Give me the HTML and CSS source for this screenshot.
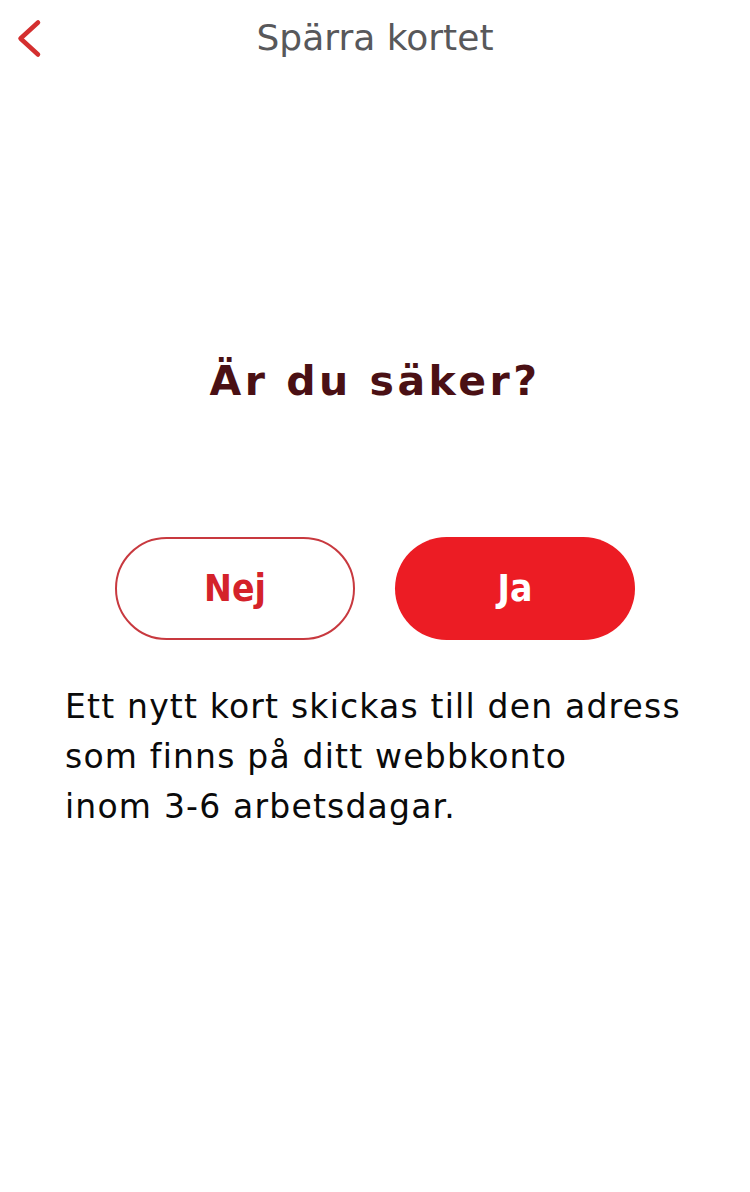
FILE: index.html
```html
<!DOCTYPE html>
<html lang="sv">
<head>
<meta charset="utf-8">
<title>Spärra kortet</title>
<link rel="stylesheet" href="styles.css">
</head>
<body>
<div class="screen">
  <header class="topbar">
    <button class="back" aria-label="Tillbaka">
      <svg width="30" height="40" viewBox="0 0 30 40"><path d="M24 3.5 L6.5 19.5 L24 35.5" fill="none" stroke="#d42f2f" stroke-width="4.5" stroke-linecap="round" stroke-linejoin="round"/></svg>
    </button>
    <h1 class="title">Spärra kortet</h1>
  </header>
  <main class="content">
    <h2 class="question">Är du säker?</h2>
    <div class="actions">
      <button class="btn btn-outline">Nej</button>
      <button class="btn btn-fill">Ja</button>
    </div>
    <p class="info">Ett nytt kort skickas till den adress<br>som finns på ditt webbkonto<br>inom 3-6 arbetsdagar.</p>
  </main>
</div>
</body>
</html>
```
FILE: styles.css
```css
* { box-sizing: border-box; }
html, body { margin: 0; padding: 0; background: #fff; }
body { font-family: "DejaVu Sans", Verdana, sans-serif; }
.screen { width: 750px; height: 1192px; display: flex; flex-direction: column; }
.topbar { height: 76px; padding-top: 16px; display: flex; justify-content: center; position: relative; }
.back { position: absolute; left: 14px; top: 19px; border: 0; background: none; padding: 0; width: 30px; height: 40px; display: block; }
.back svg { display: block; }
.title { margin: 0; font-weight: 400; font-size: 36px; line-height: 44px; color: #58585a; }
.content { display: flex; flex-direction: column; align-items: center; padding-top: 275px; }
.question { margin: 0; font-size: 41px; font-weight: 700; color: #4a1014; letter-spacing: 3.5px; line-height: 60px; }
.actions { display: flex; gap: 40px; margin-top: 126px; }
.btn { width: 240px; height: 103px; border-radius: 52px; font-family: "DejaVu Sans Condensed", "DejaVu Sans", sans-serif; font-size: 37px; font-weight: 700; cursor: pointer; padding: 0; }
.btn-outline { background: #fff; border: 2px solid #c8393f; color: #d4222a; }
.btn-fill { background: #ec1c24; border: 0; color: #fff; }
.info { align-self: stretch; margin: 42px 0 0; padding: 0 40px 0 65px; font-size: 33px; line-height: 50px; color: #0a0a0a; letter-spacing: 1.2px; white-space: nowrap; }
```
